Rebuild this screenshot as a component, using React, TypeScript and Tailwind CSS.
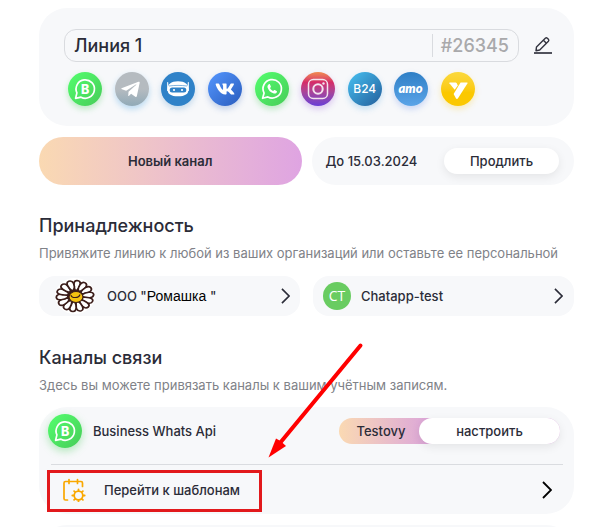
import React, { useState } from 'react';
import { FaTelegramPlane, FaVk } from 'react-icons/fa';

interface Channel {
  name: string;
  className: string;
  icon: React.ReactNode;
}

function WhatsAppIcon() {
  return (
    <svg viewBox="0 0 34 34" className="size-full" fill="none">
      <path
        d="M7.600 26.300l1.500-5.200A9.200 9.200 0 1 1 12.900 24.900z"
        stroke="white"
        strokeWidth="1.700"
        strokeLinejoin="round"
      />
      <path
        d="M13.900 12.200c.4-.3.9-.2 1.100.2l.9 2c.1.4 0 .6-.9 1.500.7 1.500 1.700 2.400 3.200 3.100.9-1 1.100-1.100 1.500-.9l1.900.9c.4.2.5.5.3 1-.5 1.300-1.700 1.800-3 1.500-3.300-.8-5.700-3.200-6.400-6.200-.2-1.300.4-2.500 1.400-3.100z"
        fill="white"
      />
    </svg>
  );
}

function BusinessIcon() {
  return (
    <svg viewBox="0 0 34 34" className="size-full" fill="none">
      <path
        d="M7.600 26.300l1.300-5.400A9.200 9.200 0 1 1 13 25.200z"
        stroke="white"
        strokeWidth="1.700"
        strokeLinejoin="round"
      />
      <text
        x="17.200"
        y="21.500"
        textAnchor="middle"
        fill="white"
        fontSize="12.500"
        fontWeight="800"
        fontFamily="Inter, sans-serif"
      >
        B
      </text>
    </svg>
  );
}

function BotIcon() {
  return (
    <svg viewBox="0 0 34 34" className="size-full" fill="none">
      <path d="M6.700 10.500v8M27.300 10.500v8" stroke="white" strokeWidth="1.100" strokeLinecap="round" />
      <path
        d="M6.500 17.500c0-5.300 3.400-8.300 10.500-8.300s10.500 3 10.500 8.300c0 4.600-3.400 6.800-10.500 6.800s-10.500-2.200-10.500-6.800z"
        fill="white"
      />
      <path d="M8 14c5.300-.8 12.700-.8 18 0" stroke="#2f82c8" strokeWidth=".6" />
      <rect x="8.700" y="15.500" width="16.600" height="5" rx="2.500" fill="#2f82c8" />
      <circle cx="13" cy="18" r="1.100" fill="white" />
      <circle cx="21" cy="18" r="1.100" fill="white" />
    </svg>
  );
}

function InstagramIcon() {
  return (
    <svg viewBox="0 0 34 34" className="size-full" fill="none" stroke="#f3e3ee">
      <rect x="7.500" y="7.500" width="19" height="19" rx="4.800" strokeWidth="1.500" />
      <circle cx="17" cy="17" r="4.700" strokeWidth="2" />
      <circle cx="22.500" cy="11.500" r="1.200" fill="#f3e3ee" stroke="none" />
    </svg>
  );
}

function YclientsIcon() {
  return (
    <svg viewBox="0 0 34 34" className="size-full" fill="white">
      <path d="M9 10.500h5.600c.5 0 .8.2 1 .6l1.200 2.500-3.100 4.100L8.400 11.300c-.2-.5.1-.8.6-.8z" />
      <path d="M19.600 10.500h6.300c.6 0 .8.400.5.900L17 26.200c-.6.9-1.600.9-2.100 0L12.600 22z" />
    </svg>
  );
}

function AmoIcon() {
  return (
    <svg viewBox="0 0 34 34" className="size-full">
      <text
        x="16.500"
        y="20.500"
        textAnchor="middle"
        fill="white"
        fontSize="13"
        fontWeight="800"
        fontStyle="italic"
        fontFamily="Lato, sans-serif"
      >
        amo
      </text>
    </svg>
  );
}

function EditIcon() {
  return (
    <svg viewBox="0 0 20 20" className="size-5" fill="none" stroke="#33343f" strokeWidth="1.400" strokeLinejoin="round">
      <path d="M3 14.700l.5-3.800 8.800-8.700c.7-.6 1.400-.6 2 0l1.100 1.100c.6.7.6 1.300 0 2L6.700 14z" />
      <path d="M10.400 4.200l3 3" />
      <path d="M1 17h18" strokeWidth="1.700" />
    </svg>
  );
}

function DaisyIcon() {
  const petals = [8, 33, 59, 85, 111, 136, 162, 188, 213, 239, 265, 290, 316, 342];
  return (
    <svg viewBox="0 0 40 36" className="h-9 w-10 shrink-0">
      <ellipse cx="20" cy="18" rx="20" ry="18" fill="white" />
      <g transform="translate(20 18) scale(1.200 1)">
        <circle r="9" fill="#3b1d1a" />
        {petals.map((angle) => (
          <path
            key={angle}
            d="M-.8-6C-2.800-9-3.900-15.200-.5-15.600 3.700-15.800 3.500-9.500.8-6z"
            transform={`rotate(${angle})`}
            fill="white"
            stroke="#3b1d1a"
            strokeWidth="1.500"
          />
        ))}
      </g>
      <ellipse cx="21" cy="19" rx="7" ry="5.500" fill="#f5c211" stroke="#3b1d1a" strokeWidth="1.200" />
      <path d="M16 17c0 3.500 8 3.500 9-.5" fill="none" stroke="#3b1d1a" strokeWidth="1.100" />
    </svg>
  );
}

function CalendarGearIcon() {
  return (
    <svg viewBox="0 0 24 24" className="size-6 shrink-0" fill="none" stroke="#f9a800" strokeWidth="1.700" strokeLinecap="round">
      <path d="M5.500 22H3.500A1.500 1.500 0 0 1 2 20.500V5a1.500 1.500 0 0 1 1.500-1.500H19A1.500 1.500 0 0 1 20.500 5v3.500" />
      <path d="M7 1.500v4M15.500 1.500v4" />
      <circle cx="16.500" cy="17.500" r="4.300" />
      <path
        d="M16.500 11.300v1.500M16.500 22.200v1.500M10.300 17.500h1.500M21.200 17.500h1.500M12.100 13.100l1.100 1.100M19.800 20.800l1.100 1.100M12.100 21.900l1.100-1.100M19.800 14.200l1.100-1.100"
        strokeWidth="1.800"
      />
    </svg>
  );
}

function Chevron({ className }: { className: string }) {
  return (
    <svg viewBox="0 0 10 18" className={className} fill="none" stroke="currentColor">
      <path d="M1 1l8 8-8 8" strokeWidth="1.800" />
    </svg>
  );
}

const channels: Channel[] = [
  {
    name: 'WhatsApp Business',
    className: 'bg-linear-to-br from-[#53ff6e] to-[#47cc58] shadow-[0_3px_6px_#47cc5855]',
    icon: <BusinessIcon />,
  },
  {
    name: 'Telegram',
    className: 'bg-linear-to-b from-[#b5bbc0] from-50% to-[#90aab8] shadow-[0_3px_6px_#3a9be055]',
    icon: <FaTelegramPlane className="mr-[3px] size-[21px] text-white" />,
  },
  {
    name: 'Bot',
    className: 'bg-[#2f82c8] shadow-[0_3px_6px_#2f82c844]',
    icon: <BotIcon />,
  },
  {
    name: 'VK',
    className: 'bg-linear-to-br from-[#5597ff] to-[#2a5cbd] shadow-[0_3px_6px_#2a5cbd44]',
    icon: <FaVk className="size-5 text-white" />,
  },
  {
    name: 'WhatsApp',
    className: 'bg-linear-to-br from-[#53ff6e] to-[#47cc58] shadow-[0_3px_6px_#47cc5855]',
    icon: <WhatsAppIcon />,
  },
  {
    name: 'Instagram',
    className: 'bg-linear-to-b from-[#f08a50] via-[#d62a68] via-30% to-[#6a3bd6] shadow-[0_3px_6px_#8a3bd644]',
    icon: <InstagramIcon />,
  },
  {
    name: 'Bitrix24',
    className: 'bg-linear-to-br from-[#48c2f2] to-[#245f9c] shadow-[0_3px_6px_#3a9be044]',
    icon: <span className="text-xs text-white">B24</span>,
  },
  {
    name: 'amoCRM',
    className: 'bg-linear-to-b from-[#2e7fc6] to-[#5ba4e8] shadow-[0_3px_6px_#4a78e844]',
    icon: <AmoIcon />,
  },
  {
    name: 'YCLIENTS',
    className: 'bg-linear-to-b from-[#fbd93c] to-[#fbc800] to-60% shadow-[0_3px_6px_#fbc80044]',
    icon: <YclientsIcon />,
  },
];

export default function App() {
  const [lineName, setLineName] = useState('Линия 1');

  return (
    <main className="h-screen overflow-hidden bg-white pt-2 pr-[33px] pl-[39px] font-[Inter,sans-serif] text-[13px] leading-5 font-medium text-[#2b2c38]">
      <section className="rounded-[28px] bg-[#f7f8fa] pt-[21px] pr-[21px] pb-5 pl-[25px]">
        <div className="flex items-center gap-[14px]">
          <div className="flex h-[33px] min-w-0 flex-1 items-center rounded-xl border border-[#d9dbdf] px-[9px]">
            <input
              aria-label="Название линии"
              value={lineName}
              onChange={(e) => setLineName(e.target.value)}
              className="min-w-0 flex-1 bg-transparent text-lg outline-none"
            />
            <span className="border-l border-[#d9dbdf] pl-2 text-lg leading-[23px] text-[#a9a9ab]">#26345</span>
          </div>
          <button type="button" aria-label="Редактировать">
            <EditIcon />
          </button>
        </div>
        <div className="mt-[10px] ml-1 flex max-w-[407px] justify-between">
          {channels.map((channel) => (
            <button
              key={channel.name}
              type="button"
              aria-label={channel.name}
              className={`flex size-[34px] items-center justify-center rounded-full ${channel.className}`}
            >
              {channel.icon}
            </button>
          ))}
        </div>
      </section>

      <div className="mt-[11px] grid grid-cols-2 gap-[10px]">
        <button
          type="button"
          className="h-12 rounded-full bg-linear-to-r from-[#fad9b2] to-[#dfa4e2] font-semibold"
        >
          Новый канал
        </button>
        <div className="flex h-12 items-center justify-between rounded-full bg-[#f7f8fa] pr-[15px] pl-[14px]">
          <span>До 15.03.2024</span>
          <button type="button" className="h-[26px] w-[115px] rounded-full bg-white shadow-[0_3px_10px_#00000014]">
            Продлить
          </button>
        </div>
      </div>

      <section className="mt-[27px]">
        <h2 className="text-lg leading-7">Принадлежность</h2>
        <p className="mt-[3px] font-normal whitespace-nowrap text-[#808288]">
          Привяжите линию к любой из ваших организаций или оставьте ее персональной
        </p>
        <div className="mt-[13px] grid grid-cols-2 gap-[13px]">
          <button type="button" className="flex h-10 items-center rounded-2xl bg-[#f7f8fa] pr-[10px] pl-4">
            <DaisyIcon />
            <span className="ml-3">
              ООО "<span className="font-['Liberation_Sans',sans-serif] text-sm font-normal text-black">Ромашка </span>"
            </span>
            <Chevron className="ml-auto h-4 w-[9px]" />
          </button>
          <button type="button" className="flex h-10 items-center rounded-2xl bg-[#f7f8fa] pr-[11px] pl-[10px]">
            <span className="flex size-7 items-center justify-center rounded-full bg-[#69cc61] font-['Open_Sans',sans-serif] text-sm font-normal text-white">
              CT
            </span>
            <span className="ml-[10px]">Chatapp-test</span>
            <Chevron className="ml-auto h-4 w-[9px]" />
          </button>
        </div>
      </section>

      <section className="relative mt-7">
        <h2 className="text-lg leading-7">Каналы связи</h2>
        <p className="mt-[3px] font-normal text-[#808288]">
          Здесь вы можете привязать каналы к вашим учётным записям.
        </p>
        <div className="mt-3 rounded-[28px] bg-[#f7f8fa] pt-[7px]">
          <div className="flex items-center pr-[14px] pl-[9px]">
            <span className="size-[34px] rounded-full bg-linear-to-br from-[#53ff6e] to-[#47cc58] shadow-[0_3px_8px_#47cc5866]">
              <BusinessIcon />
            </span>
            <span className="ml-[11px]">Business Whats Api</span>
            <div className="ml-auto flex h-[26px] w-[221px] items-center rounded-full bg-linear-to-r from-[#fad9b2] to-[#d9a0dc] to-45%">
              <span className="flex-1 pl-1 text-center">Testovy</span>
              <button type="button" className="h-full w-[141px] rounded-full bg-white shadow-[0_3px_10px_#00000014]">
                настроить
              </button>
            </div>
          </div>
          <hr className="mt-4 mr-[11px] ml-3 border-[#dadce0]" />
          <button type="button" className="relative flex h-[49px] w-full items-center pr-[22px] pl-[23px] text-left">
            <CalendarGearIcon />
            <span className="ml-[18px]">Перейти к шаблонам</span>
            <Chevron className="ml-auto h-[18px] w-[10px] text-black" />
            <span className="absolute top-[5px] left-2 h-[42px] w-[215px] border-3 border-[#e2191c]" />
          </button>
        </div>
        <svg
          viewBox="0 0 96 116"
          className="pointer-events-none absolute top-[-2px] left-[229px] h-[116px] w-24"
        >
          <path d="M92.500 3.500L12 101" stroke="#ff0000" strokeWidth="4" strokeLinecap="round" />
          <path d="M.5 115.500L8 96.500l4.500 2.500 5.500 5z" fill="#ff0000" />
        </svg>
      </section>

      <div className="mt-[11px] h-16 rounded-[28px] bg-[#f7f8fa]" />
    </main>
  );
}
